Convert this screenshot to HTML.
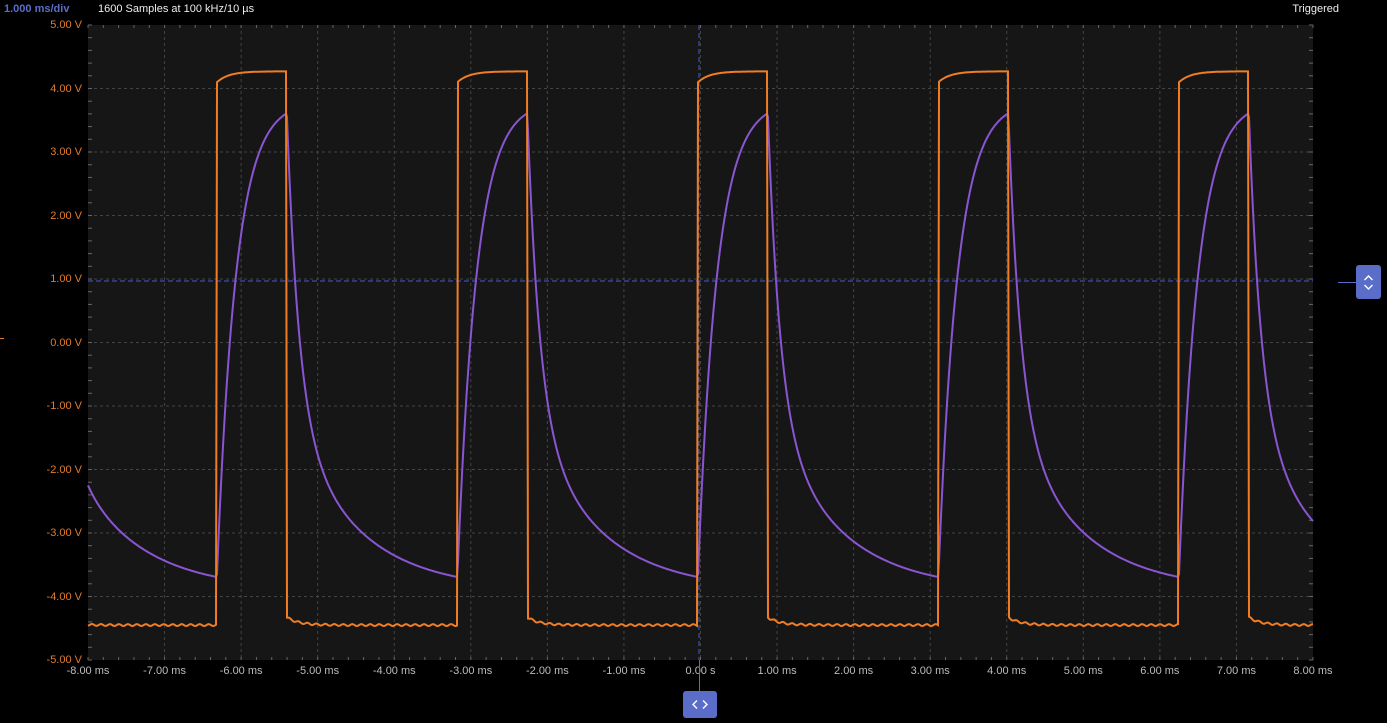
<!DOCTYPE html>
<html><head><meta charset="utf-8"><style>
html,body{margin:0;padding:0;background:#000;width:1387px;height:721px;overflow:hidden;font-family:"Liberation Sans",sans-serif}
.t{position:absolute;font-size:11px;white-space:nowrap}
.vl{position:absolute;right:1305px;color:#e07b2c;font-size:11px}
.tl{position:absolute;top:665px;color:#bdbdbd;font-size:11px;transform:translateX(-50%)}
.btn{position:absolute;background:#5a6ec9;border-radius:3px;color:#fff}
</style></head><body>
<div class="t" style="left:4px;top:3px;color:#5a6ec9;font-weight:bold">1.000 ms/div</div>
<div class="t" style="left:98px;top:3px;color:#eee">1600 Samples at 100 kHz/10 µs</div>
<div class="t" style="right:48px;top:3px;color:#eee">Triggered</div>
<svg id="s" width="1387" height="721" style="position:absolute;left:0;top:0"></svg>
<div id="lab"></div>
<div style="position:absolute;left:1338px;top:282px;width:18px;height:1px;background:#5a6ec9"></div>
<div class="btn" style="left:1356px;top:265px;width:25px;height:34px">
<svg width="25" height="34"><path d="M8.5 15 L12.5 11 L16.5 15 M8.5 20 L12.5 24 L16.5 20" stroke="#fff" stroke-width="1.4" fill="none"/></svg></div>
<div style="position:absolute;left:699px;top:660px;width:1px;height:31px;background:#5a6ec9"></div>
<div class="btn" style="left:683px;top:691px;width:34px;height:27px">
<svg width="34" height="27"><path d="M14 9.5 L10 13.5 L14 17.5 M20 9.5 L24 13.5 L20 17.5" stroke="#fff" stroke-width="1.4" fill="none"/></svg></div>
<div style="position:absolute;left:0;top:338px;width:4px;height:1px;background:#e07b2c"></div>
<script>
var L=88,R=1313,T=25,B=660,dx=(R-L)/16,dy=(B-T)/10;
var X=t=>700.5+t*dx, Y=v=>342.5-v*dy;
var h='<rect x="'+L+'" y="'+T+'" width="'+(R-L)+'" height="'+(B-T)+'" fill="#161617"/>';
for(var i=1;i<16;i++){var x=L+i*dx;h+='<line x1="'+x+'" y1="'+T+'" x2="'+x+'" y2="'+B+'" stroke="#444" stroke-dasharray="3,3"/>';}
for(var i=1;i<10;i++){var y=T+i*dy;h+='<line x1="'+L+'" y1="'+y+'" x2="'+R+'" y2="'+y+'" stroke="#444" stroke-dasharray="3,3"/>';}
for(var i=0;i<=80;i++){var x=L+i*dx/5;h+='<line x1="'+x+'" y1="'+T+'" x2="'+x+'" y2="'+(T+3)+'" stroke="#666"/><line x1="'+x+'" y1="'+B+'" x2="'+x+'" y2="'+(B-3)+'" stroke="#666"/>';}
for(var i=0;i<=50;i++){var y=T+i*dy/5;h+='<line x1="'+L+'" y1="'+y+'" x2="'+(L+4)+'" y2="'+y+'" stroke="#666"/><line x1="'+R+'" y1="'+y+'" x2="'+(R-4)+'" y2="'+y+'" stroke="#666"/>';}
h+='<line x1="699" y1="'+T+'" x2="699" y2="'+B+'" stroke="#3f5fd0" stroke-dasharray="5,3"/>';
h+='<line x1="'+L+'" y1="281" x2="'+R+'" y2="281" stroke="#3f5fd0" stroke-dasharray="5,3"/>';
var P=240.5,W=70;
var o='',p='';
function vo(x){var k=Math.floor((x-217)/P),r=217+k*P,d=x-r;
 if(d<W) return 4.27-0.17*Math.exp(-d/12);
 var e=d-W; return -4.45+0.12*Math.exp(-e/12)+0.015*Math.sin(x*0.7);}
function vp(x){var k=Math.floor((x-217)/P),r=217+k*P,d=x-r;
 if(d<W) return 3.8-7.45*Math.exp(-d/19);
 var e=d-W; return -3.9+4.6*Math.exp(-e/12)+2.85*Math.exp(-e/65);}
for(var x=L;x<=R;x+=1){o+=(x==L?'M':'L')+x+' '+Y(vo(x)).toFixed(1);p+=(x==L?'M':'L')+x+' '+Y(vp(x)).toFixed(1);}
h+='<path d="'+p+'" stroke="#8a55d0" stroke-width="2" fill="none"/>';
h+='<path d="'+o+'" stroke="#f07d24" stroke-width="2" fill="none"/>';
document.getElementById('s').innerHTML=h;
var lb='';
for(var i=0;i<=10;i++){var v=5-i;lb+='<div class="vl" style="top:'+(T+i*dy-6)+'px">'+(v==0?'0.00':(v>0?v+'.00':'-'+(-v)+'.00'))+' V</div>';}
for(var i=0;i<=16;i++){var t=i-8;lb+='<div class="tl" style="left:'+(L+i*dx)+'px">'+(t==0?'0.00 s':t.toFixed(2)+' ms')+'</div>';}
document.getElementById('lab').innerHTML=lb;
</script>
</body></html>
